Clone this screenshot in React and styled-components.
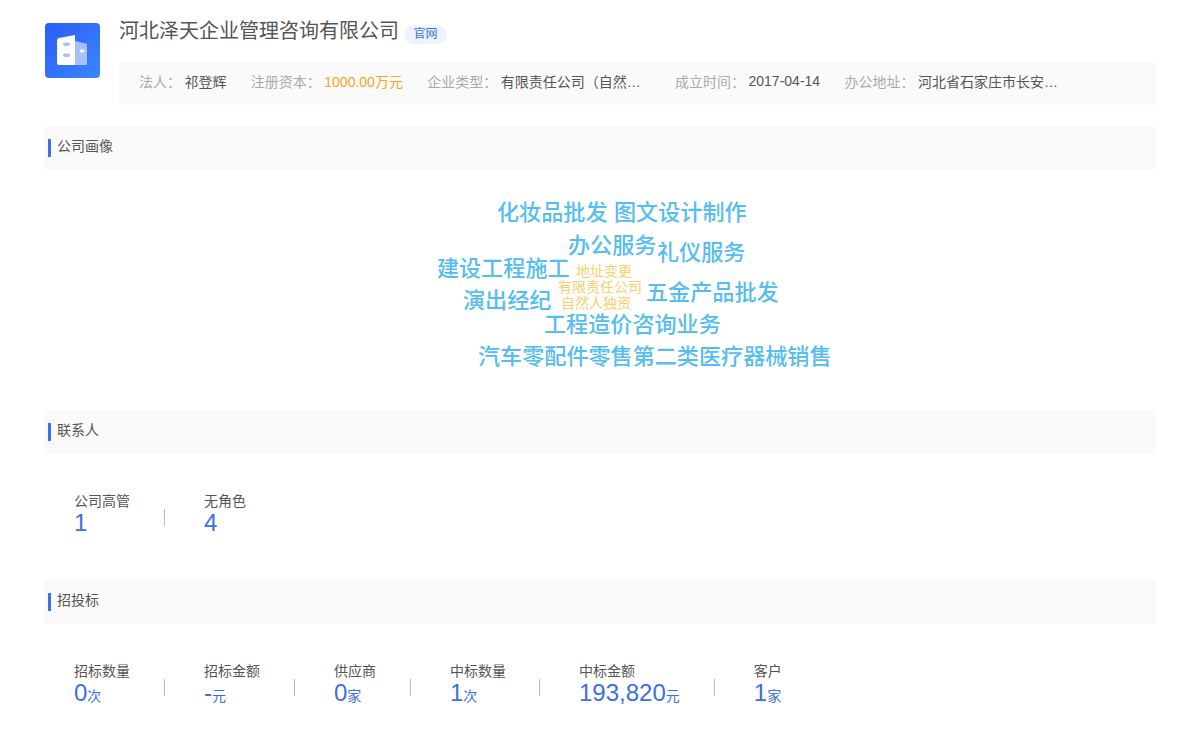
import React from 'react';
import styled, { createGlobalStyle } from 'styled-components';

const GlobalStyle = createGlobalStyle`
  html, body {
    margin: 0;
    padding: 0;
    background: #fff;
    font-family: "Liberation Sans", "Noto Sans CJK SC", sans-serif;
  }
`;

const Page = styled.div`
  width: 1200px;
  height: 752px;
  box-sizing: border-box;
  padding: 0 44px;
  overflow: hidden;
`;

const Header = styled.div`
  display: flex;
  height: 105px;
  margin-bottom: 21px;
`;

const Logo = styled.div`
  flex: none;
  width: 55px;
  height: 55px;
  margin: 23px 19px 0 1px;
  border-radius: 4px;
  background: linear-gradient(135deg, #2a5cf6, #3d86fb);
`;

const HeaderBody = styled.div`
  flex: 1;
  min-width: 0;
  padding-top: 17px;
`;

const TitleRow = styled.div`
  display: flex;
  align-items: center;
  height: 28px;
  margin-bottom: 17px;
`;

const Title = styled.h1`
  margin: 0 5px 0 0;
  font-size: 20px;
  font-weight: 400;
  line-height: 28px;
  color: #555;
`;

const Badge = styled.span`
  width: 43px;
  height: 19px;
  margin-top: 6px;
  border-radius: 10px;
  background: #eef4fd;
  color: #3b73e0;
  font-size: 12px;
  line-height: 19px;
  text-align: center;
`;

const InfoBar = styled.div`
  display: flex;
  align-items: center;
  gap: 24.3px;
  box-sizing: border-box;
  height: 43px;
  padding: 0 0 5px 20px;
  background: #fafafa;
  font-size: 14px;
`;

const InfoItem = styled.div`
  display: flex;
  align-items: center;
`;

const InfoLabel = styled.span`
  margin-right: 3.5px;
  color: #aaa;
  white-space: nowrap;
`;

const InfoValue = styled.span`
  color: ${props => props.$accent ? '#f5a623' : '#555'};
  white-space: nowrap;
  ${props => props.$truncate && `
    width: 150px;
    overflow: hidden;
    text-overflow: ellipsis;
  `}
`;

const SectionHead = styled.div`
  display: flex;
  align-items: flex-start;
  box-sizing: border-box;
  height: 44px;
  padding: 11px 0 0 4px;
  background: #fafafa;
  font-size: 14px;
  line-height: 18px;
  color: #555;

  &::before {
    content: '';
    width: 3px;
    height: 18px;
    margin: 2px 6px 0 0;
    background: #3b6ee8;
  }
`;

const Cloud = styled.div`
  position: relative;
  height: 240px;
`;

const Word = styled.span`
  position: absolute;
  left: ${props => props.$x - 44}px;
  top: ${props => props.$y - 170 - 14}px;
  font-size: ${props => props.$small ? 14 : 22.1}px;
  font-weight: ${props => props.$small ? 400 : 500};
  line-height: 30px;
  white-space: nowrap;
  color: ${props => props.$small ? '#fbcf6d' : '#55bdf0'};
`;

const StatsRow = styled.div`
  display: flex;
  box-sizing: border-box;
  height: 126px;
  padding: 38px 0 0 30px;
`;

const Stat = styled.div`
  display: flex;
  flex-direction: column;
  padding-right: 34px;
  position: relative;
  margin-right: 40px;

  &:nth-child(4) {
    padding-right: 33px;
  }

  &:not(:last-child)::after {
    content: '';
    position: absolute;
    right: -1px;
    top: 17px;
    width: 1px;
    height: 17px;
    background: #bbb;
  }
`;

const StatLabel = styled.div`
  font-size: 14px;
  line-height: 18px;
  color: #555;
  white-space: nowrap;
`;

const StatValue = styled.div`
  font-size: 24px;
  line-height: 26px;
  color: #3b6ee8;
  white-space: nowrap;
`;

const StatUnit = styled.span`
  font-size: 14px;
`;

const words = [
  { text: '化妆品批发', x: 497, y: 212 },
  { text: '图文设计制作', x: 614, y: 212 },
  { text: '办公服务', x: 568, y: 245 },
  { text: '礼仪服务', x: 657, y: 252 },
  { text: '建设工程施工', x: 437, y: 268 },
  { text: '地址变更', x: 576, y: 270, small: true },
  { text: '有限责任公司', x: 558, y: 286, small: true },
  { text: '五金产品批发', x: 646, y: 292 },
  { text: '演出经纪', x: 463, y: 300 },
  { text: '自然人独资', x: 561, y: 302, small: true },
  { text: '工程造价咨询业务', x: 544, y: 324 },
  { text: '汽车零配件零售第二类医疗器械销售', x: 478, y: 356 },
];

const contacts = [
  { label: '公司高管', value: '1' },
  { label: '无角色', value: '4' },
];

const bids = [
  { label: '招标数量', value: '0', unit: '次' },
  { label: '招标金额', value: '-', unit: '元' },
  { label: '供应商', value: '0', unit: '家' },
  { label: '中标数量', value: '1', unit: '次' },
  { label: '中标金额', value: '193,820', unit: '元' },
  { label: '客户', value: '1', unit: '家' },
];

function BuildingIcon() {
  return (
    <svg width="55" height="55" viewBox="0 0 55 55">
      <path d="M30 18 L41 20.5 Q42 20.8 42 22 V41 Q42 42 41 42 H30 Z" fill="#fff" fillOpacity="0.55" />
      <path d="M14 15 Q12 15.2 12 17.5 V40 Q12 42 14 42 H30 V12 Z" fill="#fff" />
      <rect x="18" y="19.5" width="7" height="3.5" rx="1.75" fill="#a9c0fb" />
      <rect x="18" y="30.5" width="7" height="3.5" rx="1.75" fill="#a9c0fb" />
      <rect x="34.5" y="26.5" width="5" height="3" rx="1.5" fill="#fff" />
    </svg>
  );
}

function StatList({ items }) {
  return (
    <StatsRow>
      {items.map(item => (
        <Stat key={item.label}>
          <StatLabel>{item.label}</StatLabel>
          <StatValue>
            {item.value}
            {item.unit && <StatUnit>{item.unit}</StatUnit>}
          </StatValue>
        </Stat>
      ))}
    </StatsRow>
  );
}

export default function App() {
  return (
    <Page>
      <GlobalStyle />
      <Header>
        <Logo><BuildingIcon /></Logo>
        <HeaderBody>
          <TitleRow>
            <Title>河北泽天企业管理咨询有限公司</Title>
            <Badge>官网</Badge>
          </TitleRow>
          <InfoBar>
            <InfoItem><InfoLabel>法人：</InfoLabel><InfoValue>祁登辉</InfoValue></InfoItem>
            <InfoItem><InfoLabel>注册资本：</InfoLabel><InfoValue $accent>1000.00万元</InfoValue></InfoItem>
            <InfoItem><InfoLabel>企业类型：</InfoLabel><InfoValue $truncate>有限责任公司（自然人独资）</InfoValue></InfoItem>
            <InfoItem><InfoLabel>成立时间：</InfoLabel><InfoValue>2017-04-14</InfoValue></InfoItem>
            <InfoItem><InfoLabel>办公地址：</InfoLabel><InfoValue $truncate>河北省石家庄市长安区建设北大街</InfoValue></InfoItem>
          </InfoBar>
        </HeaderBody>
      </Header>

      <SectionHead>公司画像</SectionHead>
      <Cloud>
        {words.map(word => (
          <Word key={word.text} $x={word.x} $y={word.y} $small={word.small}>{word.text}</Word>
        ))}
      </Cloud>

      <SectionHead>联系人</SectionHead>
      <StatList items={contacts} />

      <SectionHead>招投标</SectionHead>
      <StatList items={bids} />
    </Page>
  );
}
